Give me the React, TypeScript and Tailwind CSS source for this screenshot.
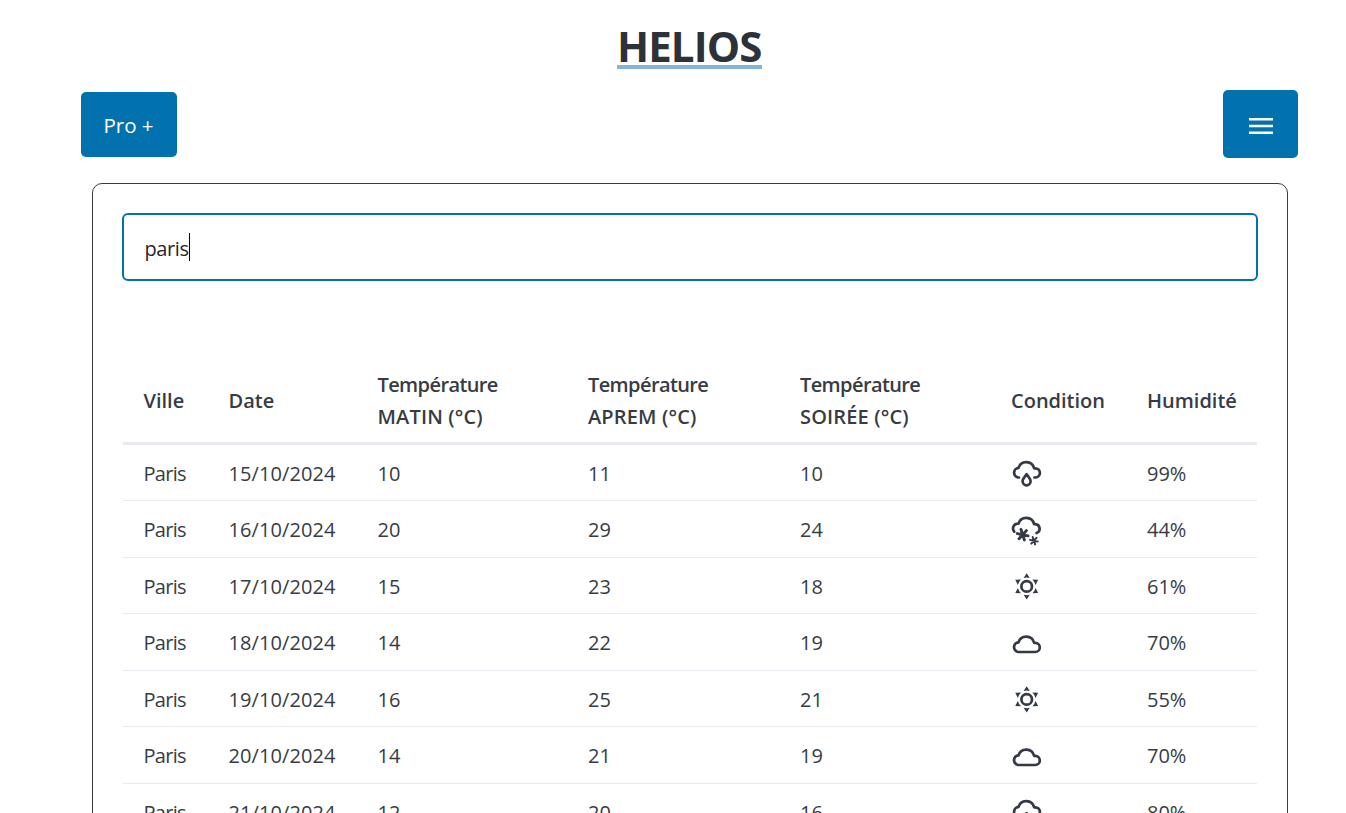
import React from "react";

type Sky = "rain" | "snow" | "sun" | "cloud";

function Flake({ x, y, r, w }: { x: number; y: number; r: number; w: number }) {
  const arms = [12, 72, 132].map((a) => {
    const t = (a * Math.PI) / 180;
    const dx = Math.cos(t) * r;
    const dy = Math.sin(t) * r;
    return `M${x - dx} ${y - dy}L${x + dx} ${y + dy}`;
  });
  return <path d={arms.join("")} strokeWidth={w} />;
}

function WeatherIcon({ sky }: { sky: Sky }) {
  return (
    <svg width="32" height="30" viewBox="0 0 32 30" fill="none" stroke="#333945" strokeWidth="2.7" strokeLinecap="round" strokeLinejoin="round" className="mt-px block">
      {sky === "rain" && (
        <>
          <path d="M8 18.5H7.1A4.9 4.9 0 0 1 7.5 8.8A8.1 8.1 0 0 1 23.1 9.3H24.2A4.6 4.6 0 0 1 24.4 18.5H23.4" />
          <path d="M15.6 15.2C14.2 17.6 11.6 19.6 11.6 22.3A4 4 0 0 0 19.6 22.3C19.6 19.6 17 17.6 15.6 15.2Z" />
        </>
      )}
      {sky === "snow" && (
        <>
          <path d="M3.2 15.6A4.9 4.9 0 0 1 7.5 7.6A8.1 8.1 0 0 1 23.1 8.1H24.2A4.6 4.6 0 0 1 25.6 17" />
          <Flake x={11.7} y={18.7} r={5.5} w={2.9} />
          <Flake x={22.9} y={24.7} r={3.9} w={2} />
        </>
      )}
      {sky === "cloud" && (
        <path d="M7 23H24.2A4.6 4.6 0 0 0 24.2 13.8H23.1A8.1 8.1 0 0 0 7.5 13.3A4.9 4.9 0 0 0 7 23Z" />
      )}
      {sky === "sun" && (
        <>
          <circle cx="15.7" cy="14.4" r="5.3" />
          <g fill="#333945" stroke="none">
            {[0, 60, 120, 180, 240, 300].map((a) => (
              <path key={a} d="M15.7 1.2L18.8 6Q15.7 5.2 12.6 6Z" transform={`rotate(${a} 15.7 14.4)`} />
            ))}
          </g>
        </>
      )}
    </svg>
  );
}

const rows: [string, number, number, number, Sky, string][] = [
  ["15/10/2024", 10, 11, 10, "rain", "99%"],
  ["16/10/2024", 20, 29, 24, "snow", "44%"],
  ["17/10/2024", 15, 23, 18, "sun", "61%"],
  ["18/10/2024", 14, 22, 19, "cloud", "70%"],
  ["19/10/2024", 16, 25, 21, "sun", "55%"],
  ["20/10/2024", 14, 21, 19, "cloud", "70%"],
  ["21/10/2024", 12, 20, 16, "rain", "80%"],
];

const headings: [string, string?][] = [
  ["Ville"],
  ["Date"],
  ["Température", "MATIN (°C)"],
  ["Température", "APREM (°C)"],
  ["Température", "SOIRÉE (°C)"],
  ["Condition"],
  ["Humidité"],
];

const cols = "grid grid-cols-[85px_149px_210.5px_212px_211px_136px_131px] items-center";

export default function App() {
  return (
    <div className="h-[813px] w-[1346px] overflow-hidden bg-white font-['Open_Sans','Noto_Sans',sans-serif] text-[20px] leading-8 text-[#373c44]">
      <header className="flex h-[90px] justify-center pt-[18px] pl-[33px]">
        <h1 className="h-[51px] w-[145px] text-[42px] font-bold leading-[55px] text-[#2d3138]">
          <span className="inline-block h-[51px] w-[145px] border-b-4 border-[#82b5d6] tracking-[-0.9px]">HELIOS</span>
        </h1>
      </header>
      <nav className="flex h-[68px] items-center justify-between pl-[81px] pr-[48px]">
        <button className="mt-px h-[65px] w-[96px] rounded-[5px] bg-[#0172ad] pt-px pr-px text-[20.5px] text-white">Pro +</button>
        <button aria-label="Menu" className="flex h-[68px] w-[75px] items-center justify-center rounded-[5px] bg-[#0172ad] pt-[3px]">
          <svg width="24" height="18" viewBox="0 0 24 18" fill="white">
            <path d="M0 1h24v2.6H0zM0 7.7h24v2.6H0zM0 14.4h24V17H0z" />
          </svg>
        </button>
      </nav>
      <main className="ml-[92px] mt-[25px] h-[700px] w-[1196px] rounded-[10px] border border-[#373c44] px-[29px] pt-[29px]">
        <div className="flex h-[68px] w-[1136px] items-center rounded-[6px] border-2 border-[#0172ad] pl-[20.5px] pt-[3px] text-[#23262c]">
          <span className="tracking-[-0.4px]">paris</span>
          <span className="-mt-[3px] h-7 w-px bg-black" />
        </div>
        <section className="ml-px mt-[77px] w-[1134px]">
          <div className={`${cols} h-[86.5px] border-b-[3px] border-[#e7eaf0] pt-[3px] font-semibold`}>
            {headings.map(([first, second], i) => (
              <div key={i} className="pl-[20.5px]">
                <div className={second ? "tracking-[-0.6px]" : "tracking-normal"}>{first}</div>
                {second && <div className="tracking-[0.15px]">{second}</div>}
              </div>
            ))}
          </div>
          {rows.map(([date, am, pm, eve, sky, humidity]) => (
            <div key={date} className={`${cols} h-[56.5px] border-b border-[#e7eaf0] pt-[2.5px]`}>
              <div className="pl-[20.5px] tracking-[-0.7px]">Paris</div>
              <div className="pl-[20.5px] tracking-[0.08px]">{date}</div>
              <div className="pl-[20.5px]">{am}</div>
              <div className="pl-[20.5px]">{pm}</div>
              <div className="pl-[20.5px]">{eve}</div>
              <div className="pl-[20.5px]"><WeatherIcon sky={sky} /></div>
              <div className="pl-[20.5px]">{humidity}</div>
            </div>
          ))}
        </section>
      </main>
    </div>
  );
}
